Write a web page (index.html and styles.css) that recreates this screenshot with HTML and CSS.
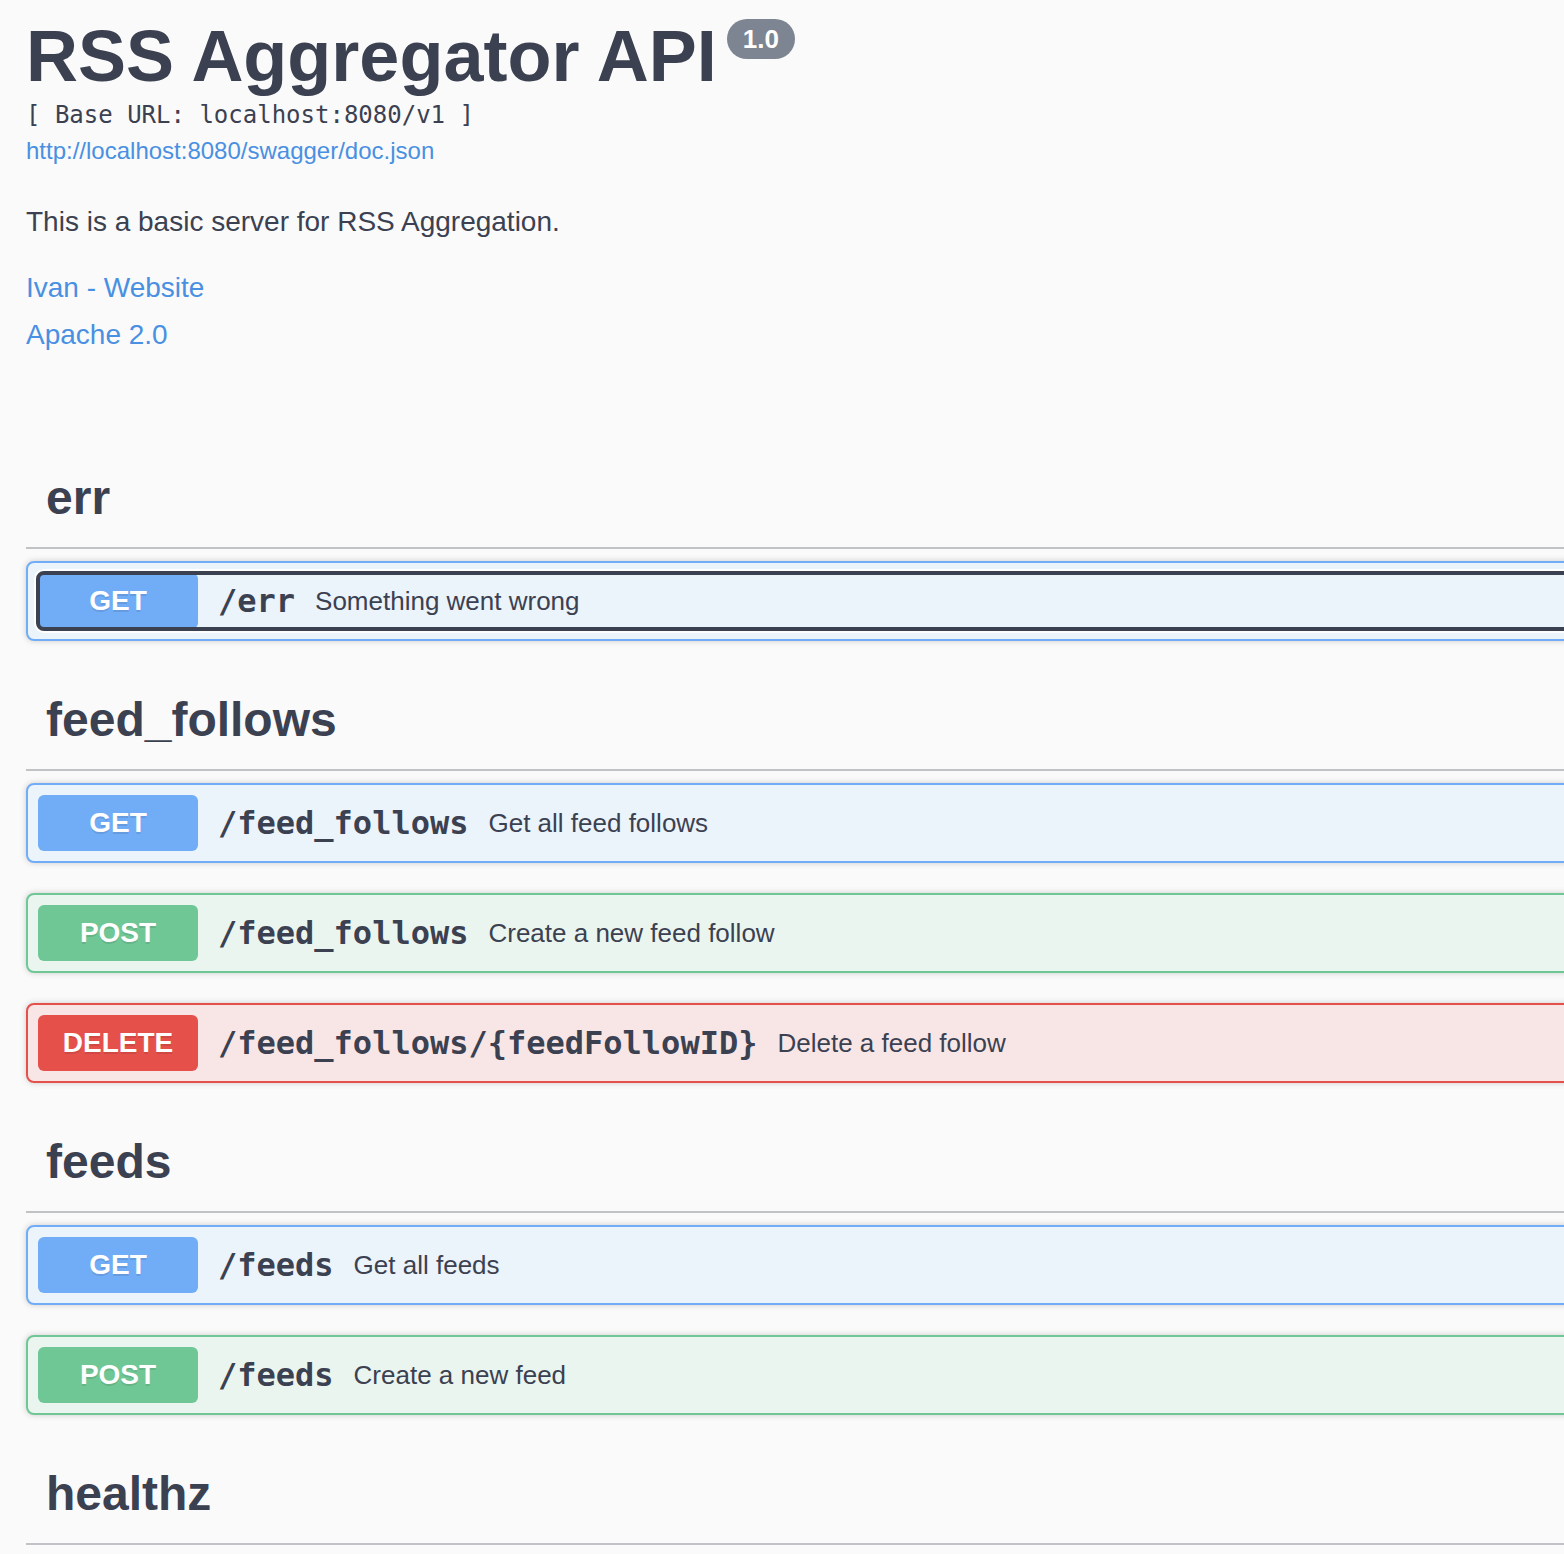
FILE: index.html
```html
<!DOCTYPE html>
<html lang="en">
<head>
<meta charset="utf-8">
<title>RSS Aggregator API</title>
<link rel="stylesheet" href="styles.css">
</head>
<body>
<div class="wrapper">
  <section class="info">
    <hgroup class="main">
      <h2 class="title">RSS Aggregator API<span class="version">1.0</span></h2>
      <pre class="base-url">[ Base URL: localhost:8080/v1 ]</pre>
      <a class="doc-link" href="#">http://localhost:8080/swagger/doc.json</a>
    </hgroup>
    <p class="description">This is a basic server for RSS Aggregation.</p>
    <div class="contact"><a href="#">Ivan - Website</a></div>
    <div class="license"><a href="#">Apache 2.0</a></div>
  </section>

  <section class="tag-section">
    <h3 class="tag">err</h3>
    <div class="opblock get">
      <div class="summary">
        <div class="control focused">
          <span class="method">GET</span>
          <span class="path">/err</span>
          <span class="desc">Something went wrong</span>
        </div>
      </div>
    </div>
  </section>

  <section class="tag-section">
    <h3 class="tag">feed_follows</h3>
    <div class="opblock get">
      <div class="summary">
        <div class="control">
          <span class="method">GET</span>
          <span class="path">/feed_follows</span>
          <span class="desc">Get all feed follows</span>
        </div>
      </div>
    </div>
    <div class="opblock post">
      <div class="summary">
        <div class="control">
          <span class="method">POST</span>
          <span class="path">/feed_follows</span>
          <span class="desc">Create a new feed follow</span>
        </div>
      </div>
    </div>
    <div class="opblock delete">
      <div class="summary">
        <div class="control">
          <span class="method">DELETE</span>
          <span class="path">/feed_follows/{feedFollowID}</span>
          <span class="desc">Delete a feed follow</span>
        </div>
      </div>
    </div>
  </section>

  <section class="tag-section">
    <h3 class="tag">feeds</h3>
    <div class="opblock get">
      <div class="summary">
        <div class="control">
          <span class="method">GET</span>
          <span class="path">/feeds</span>
          <span class="desc">Get all feeds</span>
        </div>
      </div>
    </div>
    <div class="opblock post">
      <div class="summary">
        <div class="control">
          <span class="method">POST</span>
          <span class="path">/feeds</span>
          <span class="desc">Create a new feed</span>
        </div>
      </div>
    </div>
  </section>

  <section class="tag-section">
    <h3 class="tag">healthz</h3>
  </section>
</div>
</body>
</html>
```

FILE: styles.css
```css
html, body {
  margin: 0;
  padding: 0;
  background: #fafafa;
  overflow: hidden;
}

body {
  font-family: "Liberation Sans", Arial, sans-serif;
  color: #3b4151;
}

.wrapper {
  padding-left: 26px;
  margin-right: -240px;
}

.info {
  padding-top: 15px;
  margin-bottom: 98px;
}

.info .main {
  margin: 0;
}

.title {
  margin: 0;
  font-size: 72px;
  line-height: 83px;
  font-weight: 700;
  color: #3b4151;
  white-space: nowrap;
}

.version {
  display: inline-block;
  vertical-align: top;
  position: relative;
  top: 4px;
  margin-left: 10px;
  padding: 5px 16px;
  font-size: 26px;
  line-height: 30px;
  font-weight: 700;
  color: #fff;
  background: #7d8492;
  border-radius: 57px;
}

.base-url {
  margin: 3px 0 0;
  font-family: "DejaVu Sans Mono", monospace;
  font-size: 24px;
  line-height: 28px;
  color: #3b4151;
}

.doc-link {
  display: block;
  margin-top: 8px;
  font-size: 24px;
  line-height: 28px;
  color: #4990e2;
  text-decoration: none;
}

.description {
  margin: 41px 0 0;
  font-size: 28px;
  line-height: 32px;
}

.contact, .license {
  font-size: 28px;
  line-height: 32px;
}

.contact {
  margin-top: 34px;
}

.license {
  margin-top: 15px;
}

.contact a, .license a {
  color: #4990e2;
  text-decoration: none;
}

.tag-section {
  display: flex;
  flex-direction: column;
}

.tag {
  margin: 0 0 12px;
  padding: 20px 40px 20px 20px;
  font-size: 48px;
  line-height: 58px;
  font-weight: 700;
  border-bottom: 2px solid rgba(59, 65, 81, 0.3);
  color: #3b4151;
}

.opblock {
  margin: 0 0 30px;
  border: 2px solid #000;
  border-radius: 8px;
  box-shadow: 0 0 6px rgba(0, 0, 0, 0.19);
}

.summary {
  display: flex;
  align-items: center;
  padding: 10px;
}

.control {
  display: flex;
  align-items: center;
  flex: 1;
  border-radius: 6px;
}

.control.focused {
  outline: 4px solid #3b4151;
  outline-offset: -2px;
  box-shadow: 0 0 0 4px #fff;
}

.method {
  min-width: 160px;
  padding: 12px 0;
  font-size: 28px;
  line-height: 32px;
  font-weight: 700;
  text-align: center;
  color: #fff;
  border-radius: 6px;
  text-shadow: 0 2px 0 rgba(0, 0, 0, 0.1);
}

.path {
  padding: 0 20px;
  font-family: "DejaVu Sans Mono", monospace;
  font-size: 32px;
  font-weight: 700;
  color: #3b4151;
  white-space: nowrap;
}

.desc {
  font-size: 26px;
  color: #3b4151;
  white-space: nowrap;
}

.opblock.get {
  background: #ebf3fb;
  border-color: #71adf7;
}
.opblock.get .method {
  background: #71adf7;
}

.opblock.post {
  background: #ebf5ef;
  border-color: #6fc795;
}
.opblock.post .method {
  background: #6fc795;
}

.opblock.delete {
  background: #f8e6e6;
  border-color: #e5504b;
}
.opblock.delete .method {
  background: #e5504b;
}
```
